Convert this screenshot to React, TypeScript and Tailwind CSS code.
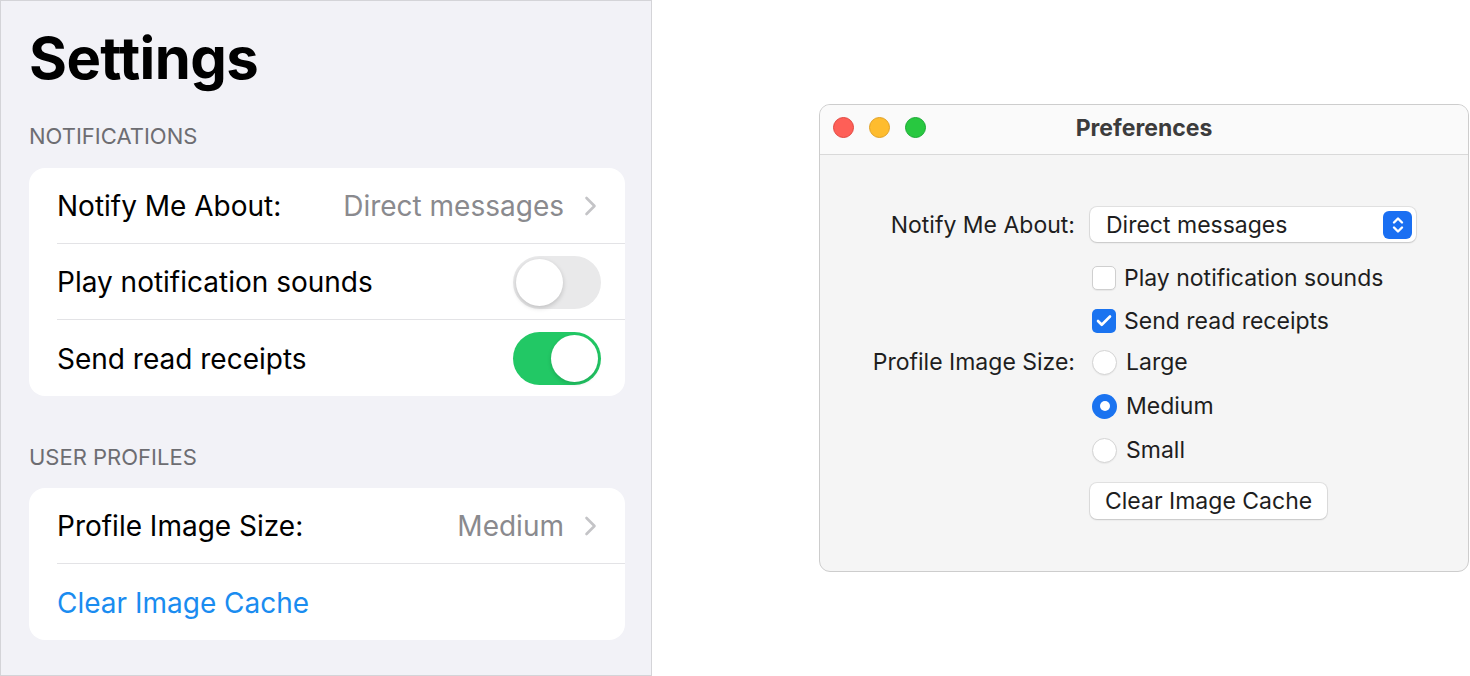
import { Check } from "lucide-react";

function Toggle({ on }: { on: boolean }) {
  return (
    <div
      className={
        on
          ? "relative h-[53px] w-[88px] shrink-0 rounded-full bg-[#22c865]"
          : "relative h-[53px] w-[88px] shrink-0 rounded-full bg-[#e9e9ea]"
      }
    >
      <div
        className={
          on
            ? "absolute right-[3px] top-[3px] h-[47px] w-[47px] rounded-full bg-white shadow-[0_2px_4px_rgba(0,0,0,0.15)]"
            : "absolute left-[3px] top-[3px] h-[47px] w-[47px] rounded-full bg-white shadow-[0_2px_5px_rgba(0,0,0,0.18)]"
        }
      />
    </div>
  );
}

function IosRow({
  label,
  children,
  last,
}: {
  label: React.ReactNode;
  children?: React.ReactNode;
  last?: boolean;
}) {
  return (
    <div className="pl-[28px]">
      <div
        className={
          last
            ? "flex h-[76px] items-center justify-between pr-[24px] pt-[1px]"
            : "flex h-[76px] items-center justify-between border-b border-[#e3e3e6] pr-[24px] pt-[1px]"
        }
      >
        {label}
        {children}
      </div>
    </div>
  );
}

function Detail({ value }: { value: string }) {
  return (
    <div className="flex items-center gap-[20px] pr-[4px] text-[#8a8a8e]">
      <span>{value}</span>
      <svg width="13" height="22" viewBox="0 0 13 22" fill="none" stroke="#c4c4c7" strokeWidth="2.6" strokeLinecap="round" strokeLinejoin="round">
        <path d="M2.5 3 10.5 11 2.5 19" />
      </svg>
    </div>
  );
}

function MacCheckbox({ checked, label }: { checked: boolean; label: string }) {
  return (
    <div className="flex h-[24px] items-center gap-[8px]">
      {checked ? (
        <div className="flex h-[24px] w-[24px] items-center justify-center rounded-[5px] bg-[#1a73f0]">
          <Check className="h-[18px] w-[18px] text-white" strokeWidth={3.5} />
        </div>
      ) : (
        <div className="h-[24px] w-[24px] rounded-[5px] border border-[#cfcfcf] bg-white shadow-[0_1px_1px_rgba(0,0,0,0.06)]" />
      )}
      <span>{label}</span>
    </div>
  );
}

function MacRadio({ checked, label }: { checked: boolean; label: string }) {
  return (
    <div className="flex h-[26px] items-center gap-[9px]">
      {checked ? (
        <div className="flex h-[25px] w-[25px] items-center justify-center rounded-full bg-[#1a73f0]">
          <div className="h-[10px] w-[10px] rounded-full bg-white" />
        </div>
      ) : (
        <div className="h-[25px] w-[25px] rounded-full border border-[#d4d4d4] bg-white shadow-[0_1px_1px_rgba(0,0,0,0.05)]" />
      )}
      <span>{label}</span>
    </div>
  );
}

export default function App() {
  return (
    <div className="flex h-[676px] w-[1470px] bg-white font-['Inter',sans-serif] text-black antialiased">
      {/* iOS settings */}
      <div className="h-[676px] w-[652px] shrink-0 border border-[#d4d4d8] bg-[#f2f2f7] pl-[28px] pr-[26px]">
        <h1 className="mt-[28px] text-[58px] font-bold leading-[58px] tracking-[-0.6px]">Settings</h1>
        <div className="mt-[36px] text-[22px] leading-[26px] text-[#6d6d72]">NOTIFICATIONS</div>
        <div className="mt-[19px] overflow-hidden rounded-[16px] bg-white text-[28px] leading-[34px]">
          <IosRow label={<span>Notify Me About:</span>}>
            <Detail value="Direct messages" />
          </IosRow>
          <IosRow label={<span>Play notification sounds</span>}>
            <Toggle on={false} />
          </IosRow>
          <IosRow label={<span>Send read receipts</span>} last>
            <Toggle on />
          </IosRow>
        </div>
        <div className="mt-[48px] text-[22px] leading-[26px] text-[#6d6d72]">USER PROFILES</div>
        <div className="mt-[18px] overflow-hidden rounded-[16px] bg-white text-[28px] leading-[34px]">
          <IosRow label={<span>Profile Image Size:</span>}>
            <Detail value="Medium" />
          </IosRow>
          <IosRow label={<span className="text-[#1a8cf0]">Clear Image Cache</span>} last />
        </div>
      </div>

      {/* macOS preferences window */}
      <div className="flex-1 pl-[167px] pt-[104px]">
        <div className="h-[468px] w-[650px] overflow-hidden rounded-[11px] border border-[#cdcdcd] bg-[#f5f5f5] text-[23px] leading-[28px] text-[#1e1e1e]">
          <div className="relative flex h-[50px] items-center justify-center border-b border-[#d9d9d9] bg-[#fafafa]">
            <div className="absolute left-[13px] top-[12px] flex gap-[15px]">
              <div className="h-[21px] w-[21px] rounded-full border border-[#e2463f] bg-[#fe5f57]" />
              <div className="h-[21px] w-[21px] rounded-full border border-[#e1a125] bg-[#febc2e]" />
              <div className="h-[21px] w-[21px] rounded-full border border-[#1aa934] bg-[#28c840]" />
            </div>
            <span className="-mt-[3px] font-bold text-[#3c3c3c]">Preferences</span>
          </div>

          <div className="pt-[52px]">
            <div className="flex items-center">
              <div className="w-[270px] pr-[15px] text-right">Notify Me About:</div>
              <div className="flex h-[35px] w-[326px] items-center justify-between rounded-[7px] bg-white pl-[16px] pr-[4px] shadow-[0_0_0_1px_rgba(0,0,0,0.08),0_1px_2px_rgba(0,0,0,0.12)]">
                <span>Direct messages</span>
                <div className="flex h-[28px] w-[29px] items-center justify-center rounded-[6px] bg-[#1a6ff2]">
                  <svg width="14" height="20" viewBox="0 0 14 20" fill="none" stroke="white" strokeWidth="2.4" strokeLinecap="round" strokeLinejoin="round">
                    <path d="M3 7.5 7 3.5 11 7.5" />
                    <path d="M3 12.5 7 16.5 11 12.5" />
                  </svg>
                </div>
              </div>
            </div>

            <div className="mt-[24px] flex">
              <div className="w-[270px]" />
              <div className="pl-[2px]">
                <MacCheckbox checked={false} label="Play notification sounds" />
              </div>
            </div>
            <div className="mt-[19px] flex">
              <div className="w-[270px]" />
              <div className="pl-[2px]">
                <MacCheckbox checked label="Send read receipts" />
              </div>
            </div>

            <div className="mt-[16px] flex">
              <div className="flex h-[26px] w-[270px] items-center justify-end pr-[15px]">Profile Image Size:</div>
              <div className="flex flex-col gap-[18px] pl-[2px]">
                <MacRadio checked={false} label="Large" />
                <MacRadio checked label="Medium" />
                <MacRadio checked={false} label="Small" />
              </div>
            </div>

            <div className="mt-[20px] flex">
              <div className="w-[270px]" />
              <div className="flex h-[36px] items-center rounded-[7px] bg-white px-[15px] shadow-[0_0_0_1px_rgba(0,0,0,0.08),0_1px_2px_rgba(0,0,0,0.12)]">
                Clear Image Cache
              </div>
            </div>
          </div>
        </div>
      </div>
    </div>
  );
}
